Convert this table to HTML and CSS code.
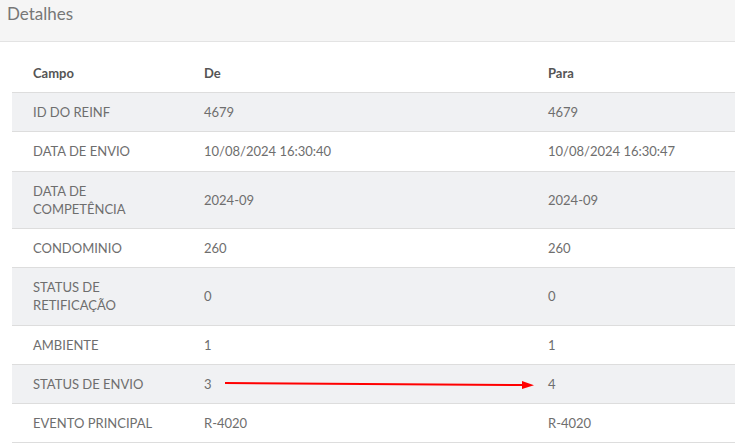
FILE: index.html
```html
<!DOCTYPE html>
<html lang="pt-BR">
<head>
  <meta charset="UTF-8" />
  <title>Detalhes</title>
  <link rel="stylesheet" href="styles.css">
</head>
<body>

  <div class="panel">
    <div class="panel-heading">Detalhes</div>

    <div class="panel-body">
      <table class="diff-table">
        <thead>
          <tr>
            <th class="col-campo">Campo</th>
            <th class="col-de">De</th>
            <th>Para</th>
          </tr>
        </thead>
        <tbody>
          <tr>
            <td>ID DO REINF</td>
            <td>4679</td>
            <td>4679</td>
          </tr>
          <tr>
            <td>DATA DE ENVIO</td>
            <td>10/08/2024 16:30:40</td>
            <td>10/08/2024 16:30:47</td>
          </tr>
          <tr>
            <td>DATA DE COMPETÊNCIA</td>
            <td>2024-09</td>
            <td>2024-09</td>
          </tr>
          <tr>
            <td>CONDOMINIO</td>
            <td>260</td>
            <td>260</td>
          </tr>
          <tr>
            <td>STATUS DE RETIFICAÇÃO</td>
            <td>0</td>
            <td>0</td>
          </tr>
          <tr>
            <td>AMBIENTE</td>
            <td>1</td>
            <td>1</td>
          </tr>
          <tr>
            <td>STATUS DE ENVIO</td>
            <td>3</td>
            <td>4</td>
          </tr>
          <tr>
            <td>EVENTO PRINCIPAL</td>
            <td>R-4020</td>
            <td>R-4020</td>
          </tr>
        </tbody>
      </table>

      <!-- anotação: seta vermelha sobre a linha alterada -->
      <svg class="arrow" width="320" height="14" viewBox="0 0 320 14">
        <line x1="0" y1="5" x2="299" y2="7" stroke="#ff0000" stroke-width="2" />
        <polygon points="297,3 309,7.2 297,11" fill="#ff0000" />
      </svg>
    </div>
  </div>

</body>
</html>
```

FILE: styles.css
```css
body {
  margin: 0;
  background: #fff;
  font-family: Lato, "Open Sans", Arial, sans-serif;
  color: #666;
  overflow: hidden;
}

.panel-heading {
  height: 42px;
  box-sizing: border-box;
  padding: 1px 0 0 7px;
  background: #f5f5f5;
  border-bottom: 1px solid #e3e3e3;
  font-size: 17px;
  line-height: 26px;
  color: #777;
}

.panel-body {
  position: relative;
  padding: 12px 0 0 12px;
}

.diff-table {
  width: 735px;
  border-collapse: collapse;
  font-size: 13px;
  line-height: 18.2px;
}

.diff-table th,
.diff-table td {
  text-align: left;
  vertical-align: middle;
  padding: 10px 21px;
}

.diff-table th {
  font-weight: bold;
  color: #555;
  border-bottom: 1px solid #ddd;
}

.diff-table td {
  color: #6e6e6e;
  border-bottom: 1px solid #ddd;
}

.col-campo {
  width: 129px;
}

.col-de {
  width: 302px;
}

.diff-table tbody tr:nth-child(odd) {
  background: #f0f1f3;
}

.arrow {
  position: absolute;
  left: 225px;
  top: 336px;
}
```
